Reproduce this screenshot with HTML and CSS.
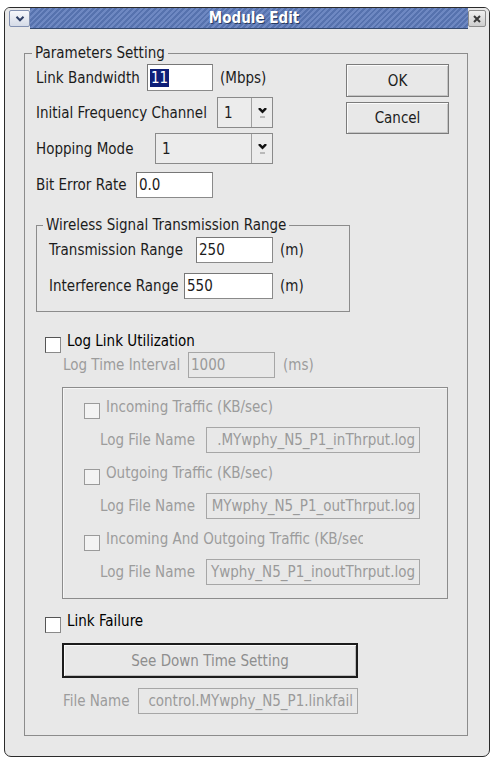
FILE: index.html
```html
<!DOCTYPE html>
<html lang="en">
<head>
  <meta charset="UTF-8" />
  <title>Module Edit</title>
  <link rel="stylesheet" href="styles.css">
</head>
<body>
  <div class="window">
    <div class="titlebar">
      <span class="tb-btn menu">
        <svg width="10" height="6" viewBox="0 0 10 6"><path d="M1.5 0.8 L5 4.3 L8.5 0.8" fill="none" stroke="#2f3f66" stroke-width="2"/></svg>
      </span>
      <div class="title">Module Edit</div>
      <span class="tb-btn close">
        <svg width="8" height="8" viewBox="0 0 8 8"><path d="M1 1 L7 7 M7 1 L1 7" stroke="#3a3a3a" stroke-width="2"/></svg>
      </span>
    </div>

    <div class="content">
      <fieldset class="group params">
        <legend>Parameters Setting</legend>

        <div class="top">
          <div class="fields">
            <div class="row r1">
              <div class="pair w177">
                <span>Link Bandwidth</span>
                <div class="field bw"><span class="sel">11</span></div>
              </div>
              <span class="unit">(Mbps)</span>
            </div>
            <div class="row r2">
              <div class="pair w237">
                <span>Initial Frequency Channel</span>
                <div class="combo ch">
                  <div class="val">1</div>
                  <div class="arrow">
                    <svg width="9" height="12" viewBox="0 0 9 12"><path d="M0.5 1 H2.5 L4.5 3 L6.5 1 H8.5 V2.6 L4.5 6.5 L0.5 2.6 Z" fill="#111"/><rect x="2" y="9" width="5" height="2" fill="#b9b9b9"/></svg>
                  </div>
                </div>
              </div>
            </div>
            <div class="row r3">
              <div class="pair w237">
                <span>Hopping Mode</span>
                <div class="combo hop">
                  <div class="val">1</div>
                  <div class="arrow">
                    <svg width="9" height="12" viewBox="0 0 9 12"><path d="M0.5 1 H2.5 L4.5 3 L6.5 1 H8.5 V2.6 L4.5 6.5 L0.5 2.6 Z" fill="#111"/><rect x="2" y="9" width="5" height="2" fill="#b9b9b9"/></svg>
                  </div>
                </div>
              </div>
            </div>
            <div class="row r4">
              <div class="pair w177">
                <span>Bit Error Rate</span>
                <div class="field ber">0.0</div>
              </div>
            </div>
          </div>

          <div class="actions">
            <button class="btn ok">OK</button>
            <button class="btn cancel">Cancel</button>
          </div>
        </div>

        <fieldset class="group range">
          <legend>Wireless Signal Transmission Range</legend>
          <div class="row wrow">
            <div class="pair w224">
              <span>Transmission Range</span>
              <div class="field tx">250</div>
            </div>
            <span class="unit">(m)</span>
          </div>
          <div class="row wrow second">
            <div class="pair w224">
              <span>Interference Range</span>
              <div class="field inf">550</div>
            </div>
            <span class="unit">(m)</span>
          </div>
        </fieldset>

        <div class="check main log-check">
          <span class="box"></span>
          <span class="check-label">Log Link Utilization</span>
        </div>

        <div class="row frow interval off-text">
          <div class="pair w212">
            <span>Log Time Interval</span>
            <div class="field off iv">1000</div>
          </div>
          <span class="unit ms">(ms)</span>
        </div>

        <div class="traffic">
          <div class="check sub">
            <span class="box off"></span>
            <span class="check-label off-text">Incoming Traffic (KB/sec)</span>
          </div>
          <div class="row frow logrow off-text">
            <div class="pair w320">
              <span>Log File Name</span>
              <div class="field off end logname">.MYwphy_N5_P1_inThrput.log</div>
            </div>
          </div>

          <div class="check sub gap">
            <span class="box off"></span>
            <span class="check-label off-text">Outgoing Traffic (KB/sec)</span>
          </div>
          <div class="row frow logrow off-text">
            <div class="pair w320">
              <span>Log File Name</span>
              <div class="field off end logname">MYwphy_N5_P1_outThrput.log</div>
            </div>
          </div>

          <div class="check sub gap">
            <span class="box off"></span>
            <span class="check-label off-text clipped">Incoming And Outgoing Traffic (KB/sec)</span>
          </div>
          <div class="row frow logrow off-text">
            <div class="pair w320">
              <span>Log File Name</span>
              <div class="field off end logname">Ywphy_N5_P1_inoutThrput.log</div>
            </div>
          </div>
        </div>

        <div class="check main fail-check">
          <span class="box"></span>
          <span class="check-label">Link Failure</span>
        </div>

        <button class="wide">See Down Time Setting</button>

        <div class="row frow filerow off-text">
          <div class="pair w295">
            <span>File Name</span>
            <div class="field off end fname">control.MYwphy_N5_P1.linkfail</div>
          </div>
        </div>
      </fieldset>
    </div>
  </div>
</body>
</html>
```

FILE: styles.css
```css
body {
  margin: 0;
  background: #fff;
  font-family: "DejaVu Sans Condensed", "DejaVu Sans", sans-serif;
  font-stretch: condensed;
  font-size: 15px;
  line-height: 18px;
  color: #1c1c1c;
}

.window {
  box-sizing: border-box;
  width: 486px;
  height: 750px;
  margin: 7px 0 0 4px;
  border: 1px solid #2b2b2b;
  border-radius: 6px 6px 7px 7px;
  background: #e8e8e8;
  overflow: hidden;
}

/* title bar */
.titlebar {
  display: flex;
  height: 21px;
  padding: 0 3px 0 4px;
  background: #e8e8e8;
}
.tb-btn {
  box-sizing: border-box;
  height: 17px;
  margin-top: 2px;
  border-radius: 2px;
  display: flex;
  align-items: center;
  justify-content: center;
}
.tb-btn.menu {
  width: 21px;
  border: 1px solid #8290b0;
  background: linear-gradient(#f6f7fb, #d5dbe7);
}
.tb-btn.close {
  width: 18px;
  border: 1px solid #8c8c8c;
  background: linear-gradient(#f0f0f0, #cdcdcd);
}
.title {
  flex: 1;
  box-sizing: border-box;
  padding-left: 10px;
  background: repeating-linear-gradient(135deg, #5672ae 0 2px, #6e88c2 2px 4px);
  border-bottom: 1px solid #34496f;
  color: #fff;
  font-weight: bold;
  text-align: center;
  line-height: 20px;
  text-shadow: 1px 1px 0 #2b3b60;
}

.content {
  padding: 15px 21px 20px 19px;
}

/* group boxes */
fieldset.group {
  margin: 0;
  min-width: 0;
  border: 1px solid #8c8c8c;
}
fieldset.group legend {
  padding: 0 3px;
  line-height: 18px;
}
.params {
  padding: 2px 18px 21px 11px;
}
.params > legend {
  margin-left: -4px;
}
.range {
  box-sizing: border-box;
  width: 314px;
  margin-top: 18px !important;
  padding: 3px 0 12px 12px;
}
.range > legend {
  margin-left: -6px;
}

/* rows */
.top {
  display: flex;
  justify-content: space-between;
}
.fields {
  display: flex;
  flex-direction: column;
}
.row {
  display: flex;
  align-items: center;
}
.r1 { height: 27px; }
.r2 { height: 31px; margin-top: 6px; }
.r3 { height: 31px; margin-top: 5px; }
.r4 { height: 26px; margin-top: 8px; }
.wrow { height: 26px; }
.wrow.second { margin-top: 10px; }

.pair {
  display: flex;
  align-items: center;
  justify-content: space-between;
  white-space: nowrap;
}
.w177 { width: 177px; }
.w237 { width: 237px; }
.w224 { width: 224px; }
.w212 { width: 212px; }
.w320 { width: 320px; }
.w295 { width: 295px; }

.unit { margin-left: 7px; }
.unit.ms { margin-left: 8px; }

/* text fields */
.field {
  box-sizing: border-box;
  height: 26px;
  padding: 0 2px;
  border: 1px solid #8a8a8a;
  border-top-color: #777;
  border-left-color: #777;
  background: #fff;
  display: flex;
  align-items: center;
  white-space: nowrap;
  overflow: hidden;
}
.field.bw { width: 66px; height: 27px; }
.field.ber { width: 77px; }
.field.tx { width: 77px; }
.field.inf { width: 89px; }
.field.iv { width: 87px; }
.field.logname { width: 214px; }
.field.fname { width: 220px; }
.field.off {
  background: #e8e8e8;
  border-color: #a6a6a6;
  color: #9a9a9a;
}
.field.end {
  justify-content: flex-end;
  padding-right: 4px;
}
.sel {
  background: #0e1f78;
  color: #fff;
  padding: 0 1px;
}

/* combo boxes */
.combo {
  box-sizing: border-box;
  height: 31px;
  display: flex;
  border: 1px solid #8a8a8a;
  background: #ececec;
}
.combo.ch { width: 56px; }
.combo.hop { width: 118px; }
.combo .val {
  flex: 1;
  padding-left: 6px;
  display: flex;
  align-items: center;
  border-right: 1px solid #a0a0a0;
}
.combo .arrow {
  width: 20px;
  display: flex;
  align-items: center;
  justify-content: center;
}

/* buttons */
.actions {
  display: flex;
  flex-direction: column;
  gap: 5px;
}
.btn, .wide {
  box-sizing: border-box;
  font: inherit;
  font-stretch: condensed;
  background: #e8e8e8;
  padding: 0;
}
.btn {
  width: 103px;
  height: 33px;
  border: 1px solid #7b7b7b;
  box-shadow: inset 1px 1px 0 #fbfbfb, inset -1px -1px 0 #c4c4c4;
  color: #1c1c1c;
}
.btn.cancel { height: 32px; }
.wide {
  display: block;
  width: 296px;
  height: 35px;
  margin: 11px 0 0 26px;
  border: 2px solid #1c1c1c;
  box-shadow: inset 1px 1px 0 #fbfbfb, inset -1px -1px 0 #bdbdbd;
  color: #8e8e8e;
}

/* checkboxes */
.check {
  display: flex;
  align-items: flex-start;
  height: 16px;
  white-space: nowrap;
}
.box {
  box-sizing: border-box;
  flex: none;
  width: 16px;
  height: 16px;
  border: 1px solid #555;
  border-right-color: #8a8a8a;
  border-bottom-color: #8a8a8a;
  background: #fff;
}
.box.off {
  border-color: #9a9a9a;
  background: #f3f3f3;
}
.check-label {
  margin: -5px 0 0 6px;
  line-height: 18px;
}
.check-label.clipped {
  width: 257px;
  overflow: hidden;
}
.check.main .check-label { color: #000; }
.main { margin-left: 9px; }
.log-check { margin-top: 25px; height: 15px; }
.fail-check { margin-top: 18px; height: 15px; }
.sub.gap { margin-top: 16px; }

.off-text { color: #9c9c9c; }

.frow { height: 26px; }
.interval { margin-left: 27px; }
.logrow { margin: 8px 0 0 16px; }
.filerow { margin: 10px 0 0 27px; }

/* traffic log box */
.traffic {
  box-sizing: border-box;
  width: 386px;
  margin: 9px 0 0 26px;
  padding: 15px 0 13px 21px;
  border: 1px solid #8c8c8c;
  box-shadow: inset 1px 1px 0 #f6f6f6;
}
```
